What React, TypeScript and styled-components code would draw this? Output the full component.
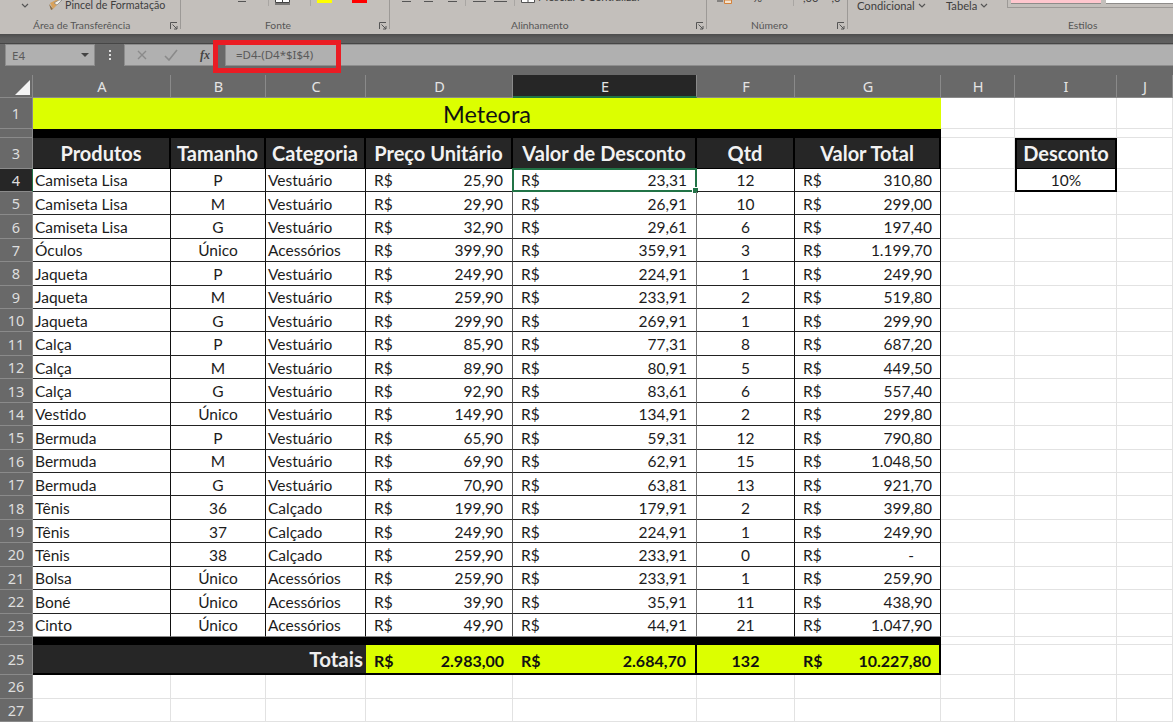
import React from "react";
import styled, { createGlobalStyle } from "styled-components";

const Global = createGlobalStyle`
  html, body { margin: 0; padding: 0; background: #fff; }
  body { width: 1173px; height: 722px; overflow: hidden; font-family: Lato, "Liberation Sans", sans-serif; }
`;

const Page = styled.div`
  position: relative;
  width: 1173px;
  height: 722px;
  overflow: hidden;
`;

/* ---------- ribbon ---------- */
const Ribbon = styled.div`
  display: flex;
  height: 34px;
  background: #c3bfbb;
  overflow: hidden;
`;
const Group = styled.div<{ $w: number }>`
  position: relative;
  flex: 0 0 ${(p) => p.$w}px;
  display: flex;
  flex-direction: column;
  border-right: 1px solid #9c9996;
  height: 29px;
  box-sizing: border-box;
`;
const Tools = styled.div<{ $pad: number }>`
  flex: 0 0 19px;
  display: flex;
  align-items: flex-start;
  height: 19px;
  padding-left: ${(p) => p.$pad}px;
  overflow: hidden;
`;
const GroupLabel = styled.div<{ $pad: number }>`
  flex: 0 0 13px;
  font: 10.3px/13px Lato, sans-serif;
  color: #565656;
  padding-left: ${(p) => p.$pad}px;
  white-space: nowrap;
`;
const Launcher = styled.svg`
  position: absolute;
  right: 2px;
  top: 22px;
`;
const ToolText = styled.span<{ $up?: number; $ml?: number; $size?: number }>`
  font: ${(p) => p.$size ?? 11.2}px/12px Lato, sans-serif;
  color: #3e3e3e;
  white-space: nowrap;
  margin-top: ${(p) => -(p.$up ?? 0)}px;
  margin-left: ${(p) => p.$ml ?? 0}px;
`;
const ToolSlot = styled.div<{ $w: number }>`
  flex: 0 0 ${(p) => p.$w}px;
  display: flex;
  align-items: flex-start;
`;
const Swatch = styled.span<{ $c: string; $w: number; $ml: number }>`
  display: block;
  width: ${(p) => p.$w}px;
  height: 3px;
  background: ${(p) => p.$c};
  margin-left: ${(p) => p.$ml}px;
`;
const Dash = styled.span<{ $w: number; $ml: number }>`
  display: block;
  width: ${(p) => p.$w}px;
  height: 1px;
  margin-top: 1px;
  background: #555;
  margin-left: ${(p) => p.$ml}px;
`;
const Sep = styled.span<{ $ml: number }>`
  display: block;
  flex: 0 0 1px;
  height: 6px;
  background: #a9a6a3;
  margin-left: ${(p) => p.$ml}px;
`;
const StyleBox = styled.span<{ $c: string; $w: number; $ml: number }>`
  display: block;
  flex: 0 0 ${(p) => p.$w}px;
  height: 3px;
  background: ${(p) => p.$c};
  margin-left: ${(p) => p.$ml}px;
  border-bottom: 1px solid #8e8c8a;
`;
const StyleGallery = styled.div`
  display: flex;
  flex: 0 0 170px;
  height: 8px;
  padding-left: 3px;
  border: 1px solid #9c9996;
  border-top: none;
  box-sizing: border-box;
`;

const LauncherIcon = () => (
  <Launcher width="8" height="8" viewBox="0 0 8 8" fill="none" stroke="#555" strokeWidth="1">
    <path d="M0.5 7V0.5H7" />
    <path d="M2.5 2.5L7 7M7 4V7H4" />
  </Launcher>
);
const Chev = () => (
  <svg width="8" height="5" viewBox="0 0 8 5" fill="none" stroke="#555" strokeWidth="1.2" style={{ marginLeft: 3, marginTop: 3 }}>
    <path d="M1 1L4 4L7 1" />
  </svg>
);
const Brush = () => (
  <svg width="16" height="11" viewBox="0 0 16 11" style={{ marginLeft: 19 }}>
    <path d="M2 3L8 0H13L9 5L5 9Z" fill="#d8a25c" />
    <path d="M6 3L11 0H14L9 5Z" fill="#f5f2ea" stroke="#777" strokeWidth=".6" />
    <path d="M1 4L5 9L3 10Z" fill="#8a6a3f" />
  </svg>
);
const MergeIcon = () => (
  <svg width="14" height="4" viewBox="0 0 14 4" fill="#fff" stroke="#555" style={{ marginLeft: 6, flex: "0 0 14px" }}>
    <path d="M.5 -2H13.5V2.5H.5ZM7 -2V2.5" />
  </svg>
);
const BorderIcon = () => (
  <svg width="15" height="5" viewBox="0 0 15 5" fill="#fff" stroke="#444" style={{ marginLeft: 6, flex: "0 0 15px" }}>
    <path d="M.5 -2H14.5V2.5H.5ZM7.5 -2V2.5" />
    <path d="M0 4H15" stroke="#333" />
  </svg>
);
const CoinIcon = () => (
  <svg width="15" height="5" viewBox="0 0 15 5" style={{ flex: "0 0 15px" }}>
    <path d="M0 1H6" stroke="#444" />
    <path d="M7.5 0H14.5V3.5H7.5Z" fill="#f3e3cf" stroke="#d4813a" />
  </svg>
);

/* ---------- formula bar ---------- */
const DarkBand = styled.div`
  height: 22px;
  padding: 10px 0 0 5px;
  background: linear-gradient(
    #4c4c4c 0,
    #5c5c5c 4px,
    #606060 9px,
    #464646 9px,
    #464646 10px,
    #696969 10px
  );
  display: flex;
  align-items: stretch;
`;
const NameBox = styled.div`
  flex: 0 0 90px;
  box-sizing: border-box;
  background: #b0b0b0;
  border: 1px solid #8d8d8d;
  display: flex;
  align-items: center;
  justify-content: space-between;
  padding: 0 5px 0 6px;
  font: 11.5px "Noto Sans", sans-serif;
  color: #5a5a5a;
`;
const Caret = styled.span`
  width: 0;
  height: 0;
  border-left: 4px solid transparent;
  border-right: 4px solid transparent;
  border-top: 4px solid #444;
`;
const Dots = styled.div`
  flex: 0 0 29px;
  display: flex;
  flex-direction: column;
  align-items: center;
  justify-content: center;
  gap: 2px;
  span { width: 2px; height: 2px; background: #ddd; }
`;
const FxBox = styled.div`
  flex: 0 0 94px;
  box-sizing: border-box;
  background: #b0b0b0;
  border: 1px solid #8d8d8d;
  display: flex;
  align-items: center;
  padding-left: 11px;
  gap: 16px;
`;
const Fx = styled.span`
  font: italic 700 12px "Liberation Serif", serif;
  color: #444;
  margin-left: 6px;
`;
const FormulaInput = styled.div`
  flex: 1;
  margin-left: 7px;
  background: #b0b0b0;
  border-left: 1px solid #8d8d8d;
  border-top: 1px solid #8d8d8d;
  border-bottom: 1px solid #8d8d8d;
  box-sizing: border-box;
  padding-left: 10px;
  font: 11.5px/20px "Noto Sans", sans-serif;
  color: #5a5a5a;
`;
const RedFrame = styled.div`
  position: absolute;
  left: 213px;
  top: 40px;
  width: 128px;
  height: 33px;
  box-sizing: border-box;
  border: 5px solid #ea1c24;
`;

/* ---------- sheet ---------- */
const COLS = [33, 138, 95, 100, 147, 184, 98, 146, 74, 102, 56];
const ROWH: number[] = [31, 9, 30.5, ...Array(20).fill(23.43), 8, 30, 24, 23];

const Sheet = styled.div`
  display: grid;
  grid-template-columns: ${COLS.map((c) => c + "px").join(" ")};
  grid-template-rows: 32px ${ROWH.map((r) => r + "px").join(" ")};
  font-size: 15.5px;
  color: #1c1c1c;
`;
const Corner = styled.div`
  position: relative;
  background: #696969;
  border-bottom: 1px solid #8a8a8a;
  padding: 14px 0 0 15px;
  box-sizing: border-box;
  svg { display: block; }
  &::after {
    content: "";
    position: absolute;
    top: 9px;
    bottom: 0;
    right: 0;
    width: 1px;
    background: #8a8a8a;
  }
`;
const ColHead = styled.div<{ $active?: boolean }>`
  display: flex;
  align-items: flex-end;
  justify-content: center;
  box-sizing: border-box;
  font: 14.5px "Noto Sans", sans-serif;
  color: #e4e4e4;
  background: #696969;
  padding-bottom: 2px;
  position: relative;
  &::before {
    content: "";
    position: absolute;
    top: 9px;
    bottom: 0;
    left: 0;
    right: 0;
    background: ${(p) => (p.$active ? "#262626" : "transparent")};
    border-right: 1px solid #8a8a8a;
    border-bottom: ${(p) => (p.$active ? "2px solid #217346" : "1px solid #8a8a8a")};
  }
  span { position: relative; }
`;
const RowHead = styled.div<{ $active?: boolean }>`
  display: flex;
  align-items: center;
  justify-content: center;
  box-sizing: border-box;
  font: 14.5px "Noto Sans", sans-serif;
  color: #dedede;
  background: ${(p) => (p.$active ? "#262626" : "#696969")};
  border-bottom: 1px solid #8a8a8a;
  border-right: ${(p) => (p.$active ? "1px solid #217346" : "1px solid #8a8a8a")};
`;
const Blank = styled.div`
  box-sizing: border-box;
  border-right: 1px solid #e2e2e2;
  border-bottom: 1px solid #e2e2e2;
`;
const Title = styled.div`
  grid-column: span 7;
  background: #dcff00;
  display: flex;
  align-items: center;
  justify-content: center;
  padding-top: 1px;
  box-sizing: border-box;
  font-size: 23.5px;
  color: #111;
`;
const BlackBar = styled.div`
  grid-column: span 7;
  background: #000;
`;
const Head = styled.div`
  background: #262626;
  color: #f2f2f2;
  font-weight: 700;
  font-size: 20px;
  display: flex;
  align-items: center;
  justify-content: center;
  box-sizing: border-box;
  border-right: 2px solid #000;
  border-bottom: 1px solid #000;
  white-space: nowrap;
`;
const Cell = styled.div<{ $align?: string; $edge?: string; $last?: boolean }>`
  position: relative;
  display: flex;
  align-items: center;
  justify-content: ${(p) => p.$align ?? "flex-start"};
  box-sizing: border-box;
  padding: 1px 2px 0 2px;
  border-right: 1px solid ${(p) => p.$edge ?? "#111"};
  border-bottom: 1px solid ${(p) => (p.$last ? "#8e8e8e" : "#222")};
  white-space: nowrap;
`;
const Money = styled(Cell)`
  justify-content: space-between;
  padding: 1px 9px 0 8px;
`;
const MoneyEnd = styled(Money)`
  padding-right: 8px;
`;
const DashValue = styled.span`
  padding-right: 18px;
`;
const Selection = styled.div`
  position: absolute;
  left: -1px;
  top: -1px;
  right: -1px;
  bottom: -1px;
  border: 2px solid #217346;
  &::after {
    content: "";
    position: absolute;
    right: -4px;
    bottom: -4px;
    width: 5px;
    height: 5px;
    background: #217346;
    border: 1px solid #fff;
  }
`;
const TotalsLabel = styled.div`
  grid-column: span 3;
  background: #262626;
  color: #eee;
  font-weight: 700;
  font-size: 20.5px;
  display: flex;
  align-items: center;
  justify-content: flex-end;
  padding: 1px 3px 0 0;
  border-bottom: 2px solid #000;
  box-sizing: border-box;
`;
const TotalCell = styled.div<{ $center?: boolean; $bar?: boolean; $end?: boolean }>`
  background: #dcff00;
  color: #111;
  font-weight: 700;
  font-size: 16px;
  display: flex;
  align-items: center;
  justify-content: ${(p) => (p.$center ? "center" : "space-between")};
  padding: 3px ${(p) => (p.$end ? 8 : 9)}px 0 8px;
  box-sizing: border-box;
  border-bottom: 2px solid #000;
  border-right: ${(p) => (p.$bar || p.$end ? "2px solid #000" : "0")};
`;
const DiscountHead = styled(Head)`
  border: 2px solid #000;
  border-bottom: 1px solid #000;
  padding-bottom: 2px;
`;
const DiscountValue = styled.div`
  display: flex;
  align-items: center;
  justify-content: center;
  padding-top: 1px;
  border: 2px solid #000;
  border-top: 0;
  box-sizing: border-box;
`;

type Row = [string, string, string, string, string, string, string];
const DATA: Row[] = [
  ["Camiseta Lisa", "P", "Vestuário", "25,90", "23,31", "12", "310,80"],
  ["Camiseta Lisa", "M", "Vestuário", "29,90", "26,91", "10", "299,00"],
  ["Camiseta Lisa", "G", "Vestuário", "32,90", "29,61", "6", "197,40"],
  ["Óculos", "Único", "Acessórios", "399,90", "359,91", "3", "1.199,70"],
  ["Jaqueta", "P", "Vestuário", "249,90", "224,91", "1", "249,90"],
  ["Jaqueta", "M", "Vestuário", "259,90", "233,91", "2", "519,80"],
  ["Jaqueta", "G", "Vestuário", "299,90", "269,91", "1", "299,90"],
  ["Calça", "P", "Vestuário", "85,90", "77,31", "8", "687,20"],
  ["Calça", "M", "Vestuário", "89,90", "80,91", "5", "449,50"],
  ["Calça", "G", "Vestuário", "92,90", "83,61", "6", "557,40"],
  ["Vestido", "Único", "Vestuário", "149,90", "134,91", "2", "299,80"],
  ["Bermuda", "P", "Vestuário", "65,90", "59,31", "12", "790,80"],
  ["Bermuda", "M", "Vestuário", "69,90", "62,91", "15", "1.048,50"],
  ["Bermuda", "G", "Vestuário", "70,90", "63,81", "13", "921,70"],
  ["Tênis", "36", "Calçado", "199,90", "179,91", "2", "399,80"],
  ["Tênis", "37", "Calçado", "249,90", "224,91", "1", "249,90"],
  ["Tênis", "38", "Calçado", "259,90", "233,91", "0", "-"],
  ["Bolsa", "Único", "Acessórios", "259,90", "233,91", "1", "259,90"],
  ["Boné", "Único", "Acessórios", "39,90", "35,91", "11", "438,90"],
  ["Cinto", "Único", "Acessórios", "49,90", "44,91", "21", "1.047,90"],
];
const LETTERS = ["A", "B", "C", "D", "E", "F", "G", "H", "I", "J"];
const HEADERS = ["Produtos", "Tamanho", "Categoria", "Preço Unitário", "Valor de Desconto", "Qtd", "Valor Total"];

export default function App() {
  return (
    <Page>
      <Global />
      <Ribbon>
        <Group $w={181}>
          <Tools $pad={18}>
            <Chev />
            <Brush />
            <ToolText $ml={1} $up={1} $size={10.7}>Pincel de Formatação</ToolText>
          </Tools>
          <GroupLabel $pad={33}>Área de Transferência</GroupLabel>
          <LauncherIcon />
        </Group>
        <Group $w={209}>
          <Tools $pad={57}>
            <Dash $w={8} $ml={0} />
            <Sep $ml={22} />
            <BorderIcon />
            <Sep $ml={20} />
            <Swatch $c="#ffff00" $w={15} $ml={6} />
            <Swatch $c="#ff0000" $w={15} $ml={20} />
          </Tools>
          <GroupLabel $pad={84}>Fonte</GroupLabel>
          <LauncherIcon />
        </Group>
        <Group $w={317}>
          <Tools $pad={12}>
            <Dash $w={9} $ml={0} />
            <Dash $w={9} $ml={13} />
            <Dash $w={9} $ml={15} />
            <Sep $ml={8} />
            <Dash $w={13} $ml={7} />
            <Dash $w={13} $ml={8} />
            <Sep $ml={7} />
            <MergeIcon />
            <ToolText $ml={3} $up={9}>Mesclar e Centralizar</ToolText>
          </Tools>
          <GroupLabel $pad={121}>Alinhamento</GroupLabel>
          <LauncherIcon />
        </Group>
        <Group $w={141}>
          <Tools $pad={10}>
            <CoinIcon />
            <ToolText $ml={21} $up={8}>%</ToolText>
            <Sep $ml={31} />
            <ToolText $ml={9} $up={8}>,00</ToolText>
            <ToolText $ml={13} $up={8}>,0</ToolText>
          </Tools>
          <GroupLabel $pad={44}>Número</GroupLabel>
          <LauncherIcon />
        </Group>
        <Group $w={325}>
          <Tools $pad={9}>
            <ToolSlot $w={89}>
              <ToolText>Condicional</ToolText>
              <Chev />
            </ToolSlot>
            <ToolSlot $w={61}>
              <ToolText>Tabela</ToolText>
              <Chev />
            </ToolSlot>
            <StyleGallery>
              <StyleBox $c="#ffc7ce" $w={90} $ml={0} />
              <StyleBox $c="#ffffff" $w={68} $ml={5} />
            </StyleGallery>
          </Tools>
          <GroupLabel $pad={220}>Estilos</GroupLabel>
        </Group>
      </Ribbon>
      <DarkBand>
        <NameBox>
          E4
          <Caret />
        </NameBox>
        <Dots>
          <span />
          <span />
          <span />
        </Dots>
        <FxBox>
          <svg width="12" height="12" viewBox="0 0 12 12" fill="none" stroke="#8a8a8a" strokeWidth="1.4">
            <path d="M2 2L10 10M10 2L2 10" />
          </svg>
          <svg width="14" height="12" viewBox="0 0 14 12" fill="none" stroke="#8a8a8a" strokeWidth="1.6">
            <path d="M1 7L5 11L13 1" />
          </svg>
          <Fx>fx</Fx>
        </FxBox>
        <FormulaInput>=D4-(D4*$I$4)</FormulaInput>
      </DarkBand>
      <Sheet>
        <Corner>
          <svg width="15" height="15" viewBox="0 0 15 15">
            <path d="M15 0V15H0Z" fill="#f4f4f4" />
          </svg>
        </Corner>
        {LETTERS.map((l) => (
          <ColHead key={l} $active={l === "E"}>
            <span>{l}</span>
          </ColHead>
        ))}

        <RowHead>1</RowHead>
        <Title>Meteora</Title>
        <Blank />
        <Blank />
        <Blank />

        <RowHead />
        <BlackBar />
        <Blank />
        <Blank />
        <Blank />

        <RowHead>3</RowHead>
        {HEADERS.map((h) => (
          <Head key={h}>{h}</Head>
        ))}
        <Blank />
        <DiscountHead>Desconto</DiscountHead>
        <Blank />

        {DATA.map((r, i) => {
          const n = i + 4;
          const last = n === 23;
          return (
            <React.Fragment key={n}>
              <RowHead $active={n === 4}>{n}</RowHead>
              <Cell $last={last}>{r[0]}</Cell>
              <Cell $last={last} $align="center">{r[1]}</Cell>
              <Cell $last={last}>{r[2]}</Cell>
              <Money $last={last} $edge="#555">
                <span>R$</span>
                <span>{r[3]}</span>
              </Money>
              <Money $last={last} $edge="#777">
                <span>R$</span>
                <span>{r[4]}</span>
                {n === 4 && <Selection />}
              </Money>
              <Cell $last={last} $align="center">{r[5]}</Cell>
              <MoneyEnd $last={last}>
                <span>R$</span>
                {r[6] === "-" ? <DashValue>-</DashValue> : <span>{r[6]}</span>}
              </MoneyEnd>
              <Blank />
              {n === 4 ? <DiscountValue>10%</DiscountValue> : <Blank />}
              <Blank />
            </React.Fragment>
          );
        })}

        <RowHead />
        <BlackBar />
        <Blank />
        <Blank />
        <Blank />

        <RowHead>25</RowHead>
        <TotalsLabel>Totais</TotalsLabel>
        <TotalCell>
          <span>R$</span>
          <span>2.983,00</span>
        </TotalCell>
        <TotalCell $bar>
          <span>R$</span>
          <span>2.684,70</span>
        </TotalCell>
        <TotalCell $center>132</TotalCell>
        <TotalCell $end>
          <span>R$</span>
          <span>10.227,80</span>
        </TotalCell>
        <Blank />
        <Blank />
        <Blank />

        {[26, 27].map((n) => (
          <React.Fragment key={n}>
            <RowHead>{n}</RowHead>
            {LETTERS.map((l) => (
              <Blank key={l} />
            ))}
          </React.Fragment>
        ))}
      </Sheet>
      <RedFrame />
    </Page>
  );
}
